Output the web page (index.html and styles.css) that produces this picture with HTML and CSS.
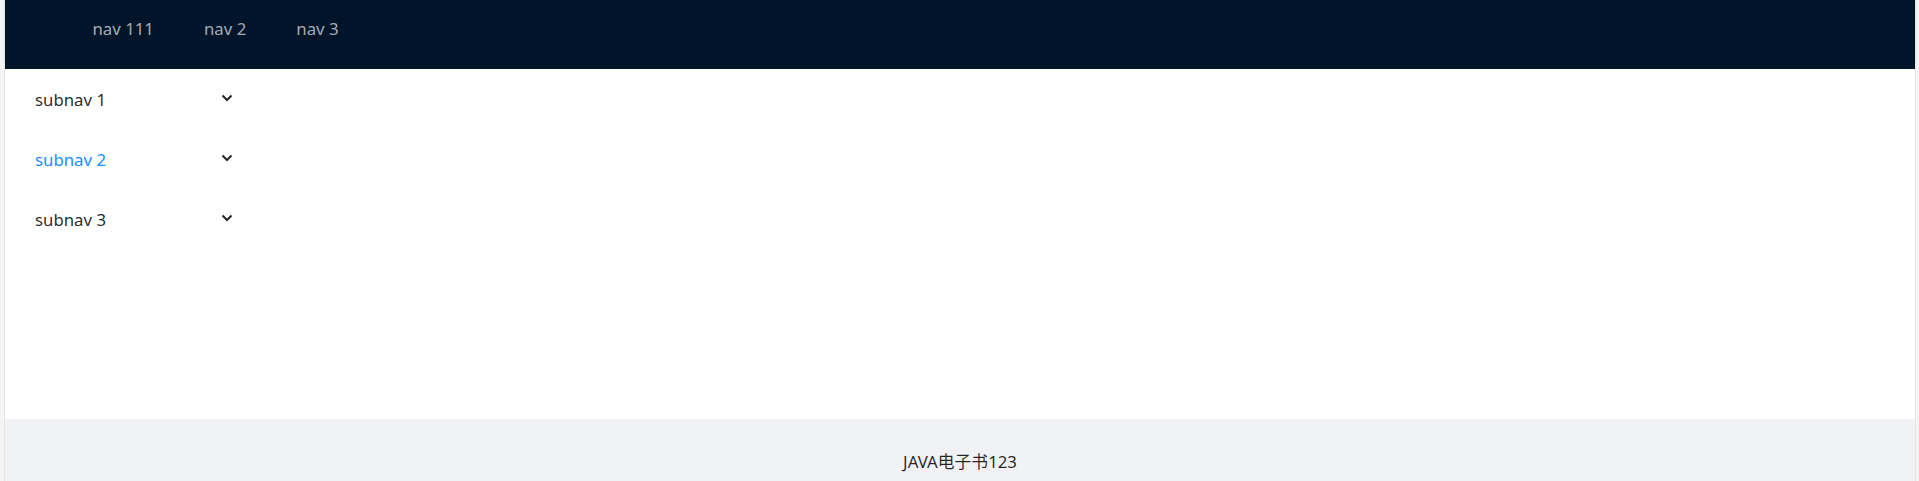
FILE: index.html
```html
<!DOCTYPE html>
<html lang="zh">
<head>
<meta charset="utf-8">
<title>JAVA电子书</title>
<link rel="stylesheet" href="styles.css">
</head>
<body>
<div class="edge edge-left"></div>
<div class="app">
  <header class="header">
    <ul class="topnav">
      <li class="topnav-item">nav 111</li>
      <li class="topnav-item">nav 2</li>
      <li class="topnav-item">nav 3</li>
    </ul>
  </header>
  <main class="main">
    <aside class="sider">
      <ul class="submenu">
        <li class="submenu-title"><span class="submenu-label">subnav 1</span>
          <svg class="arrow" width="12" height="8" viewBox="0 0 12 8"><path d="M1.5 1.5 L6 6 L10.5 1.5" fill="none" stroke="#262626" stroke-width="2"/></svg>
        </li>
        <li class="submenu-title is-active"><span class="submenu-label">subnav 2</span>
          <svg class="arrow" width="12" height="8" viewBox="0 0 12 8"><path d="M1.5 1.5 L6 6 L10.5 1.5" fill="none" stroke="#262626" stroke-width="2"/></svg>
        </li>
        <li class="submenu-title"><span class="submenu-label">subnav 3</span>
          <svg class="arrow" width="12" height="8" viewBox="0 0 12 8"><path d="M1.5 1.5 L6 6 L10.5 1.5" fill="none" stroke="#262626" stroke-width="2"/></svg>
        </li>
      </ul>
    </aside>
    <section class="content"></section>
  </main>
  <footer class="footer">JAVA电子书123</footer>
</div>
<div class="edge edge-right"></div>
</body>
</html>
```
FILE: styles.css
```css
html, body {
  margin: 0;
  padding: 0;
  height: 481px;
  overflow: hidden;
}
body {
  display: flex;
  font-family: "Noto Sans", "Noto Sans CJK SC", sans-serif;
  font-size: 16.8px;
  color: rgba(0, 0, 0, 0.85);
  background: #ffffff;
}
.edge {
  flex: none;
  background: #f4f4f4;
}
.edge-left {
  width: 4px;
  border-right: 1px solid #e4e4e4;
}
.edge-right {
  width: 3px;
  border-left: 1px solid #e4e4e4;
}
.app {
  flex: 1;
  display: flex;
  flex-direction: column;
  min-width: 0;
}
.header {
  flex: none;
  height: 69px;
  background: #001529;
  padding: 0 62.5px;
}
.topnav {
  display: flex;
  margin: 0;
  padding: 0;
  list-style: none;
  line-height: 58px;
}
.topnav-item {
  padding: 0 25px;
  color: rgba(255, 255, 255, 0.65);
}
.main {
  flex: none;
  height: 350px;
  display: flex;
  background: #ffffff;
}
.sider {
  flex: none;
  width: 250px;
  background: #ffffff;
}
.submenu {
  margin: 0;
  padding: 5px 0 0;
  list-style: none;
  display: flex;
  flex-direction: column;
  gap: 10px;
}
.submenu-title {
  height: 50px;
  padding: 0 22px 0 30px;
  display: flex;
  align-items: center;
}
.submenu-label {
  flex: 1;
}
.submenu-title.is-active .submenu-label {
  color: #1890ff;
}
.arrow {
  flex: none;
  margin-bottom: 3px;
}
.content {
  flex: 1;
}
.footer {
  flex: none;
  background: #f0f2f5;
  padding: 30px 62.5px;
  text-align: center;
  line-height: 1.5715;
}
```
